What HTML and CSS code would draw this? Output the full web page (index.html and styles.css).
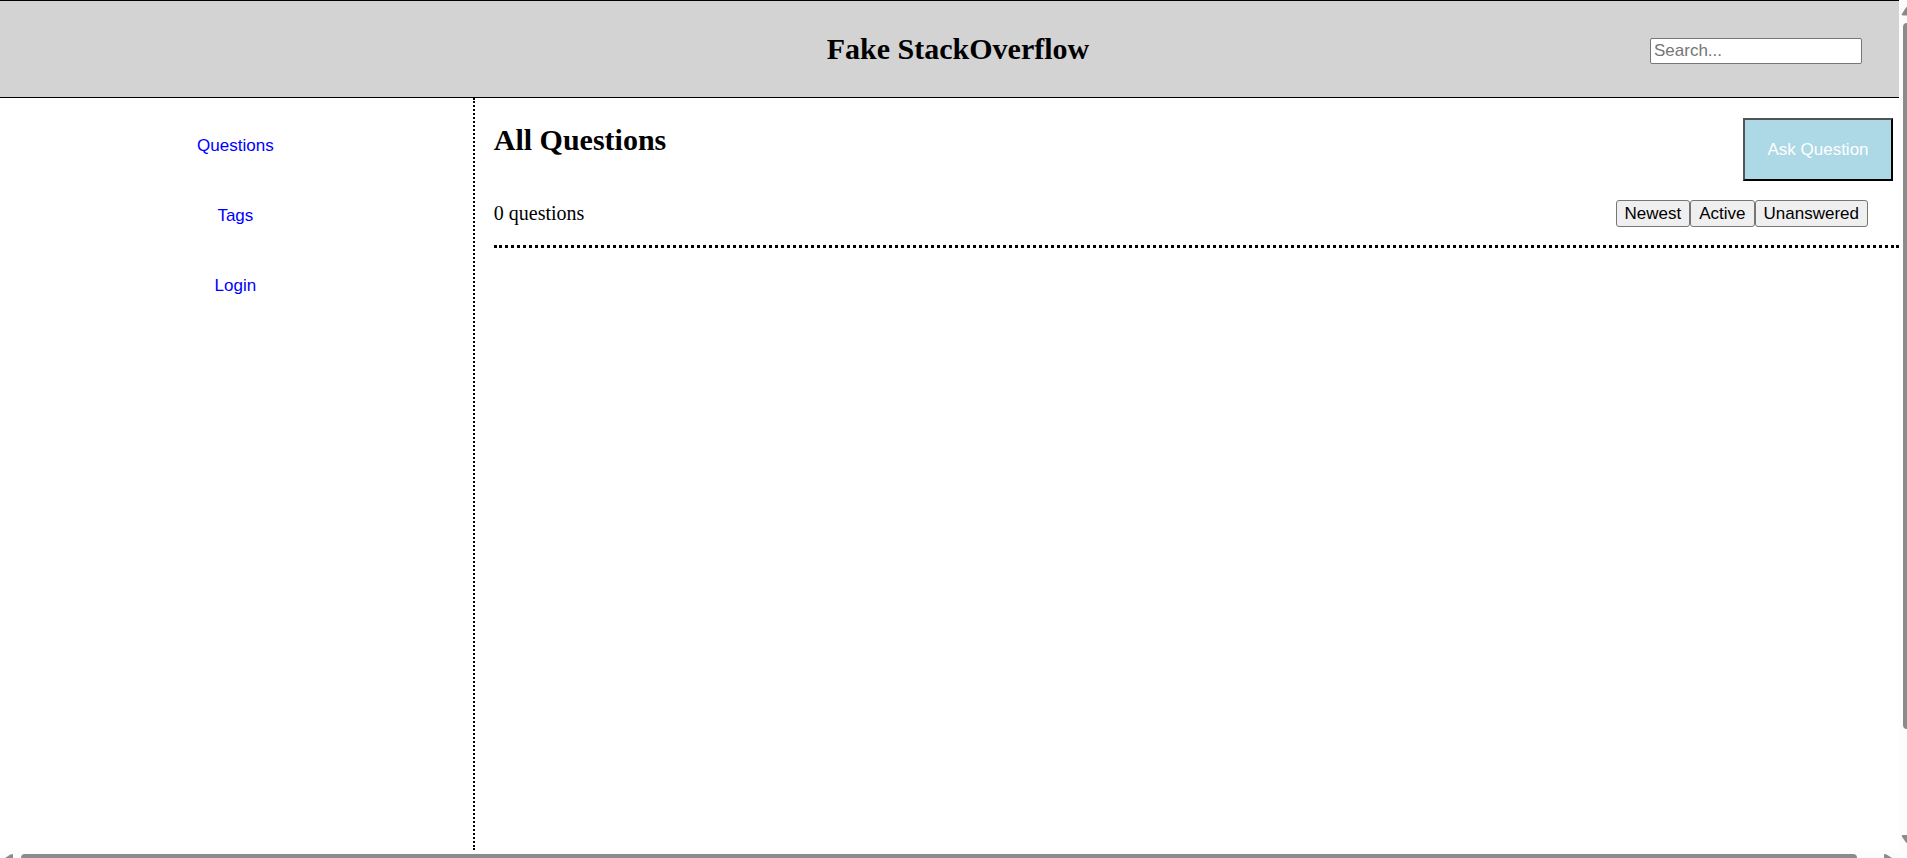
FILE: index.html
```html
<!DOCTYPE html>
<html lang="en">
<head>
<meta charset="utf-8">
<title>Fake StackOverflow</title>
<link rel="stylesheet" href="styles.css">
</head>
<body>
<div class="frame">
  <div class="page">
    <header class="header">
      <h1 class="title">Fake StackOverflow</h1>
      <input class="search" type="text" placeholder="Search..." aria-label="Search">
    </header>
    <div class="content">
      <nav class="sidebar">
        <a class="nav-link" href="#questions">Questions</a>
        <a class="nav-link" href="#tags">Tags</a>
        <a class="nav-link" href="#login">Login</a>
      </nav>
      <main class="main">
        <div class="main-top">
          <h2 class="main-title">All Questions</h2>
          <button class="ask" type="button">Ask Question</button>
        </div>
        <div class="main-bar">
          <span>0 questions</span>
          <div class="filters">
            <button class="filter" type="button">Newest</button>
            <button class="filter" type="button">Active</button>
            <button class="filter" type="button">Unanswered</button>
          </div>
        </div>
      </main>
    </div>
  </div>
  <div class="scroll-y" aria-hidden="true">
    <svg class="arrow-y" viewBox="0 0 8 23"><path d="M4 15.500Q2 15.500 3 13.800L7 7.500L8 7V15.500Z"/></svg>
    <div class="thumb-y"></div>
    <svg class="arrow-y" viewBox="0 0 8 23"><path d="M4 8Q2 8 3 9.700L7 15.500L8 16V8Z"/></svg>
  </div>
  <div class="scroll-x" aria-hidden="true">
    <svg class="arrow-x" viewBox="0 0 21 8"><path d="M5 8L10.500 4.500Q13 3.300 13 5V8Z"/></svg>
    <div class="thumb-x"></div>
    <svg class="arrow-x arrow-right" viewBox="0 0 21 8"><path d="M1 8V5Q1 3.300 3.500 4.500L9 8Z"/></svg>
  </div>
</div>
</body>
</html>
```
FILE: styles.css
```css
* {
  box-sizing: border-box;
}

body {
  margin: 0;
  background: #fff;
  color: #000;
  font-family: "Liberation Serif", "Times New Roman", serif;
  font-size: 20px;
}

.frame {
  display: grid;
  grid-template-columns: 1fr 8px;
  grid-template-rows: 1fr 8px;
  height: 100vh;
  overflow: hidden;
}

.page {
  display: flex;
  flex-direction: column;
  min-width: 0;
}

.header {
  display: grid;
  grid-template-columns: 1fr auto 1fr;
  align-items: center;
  padding: 31px 37px 31px 54px;
  border-top: 1px solid #000;
  border-bottom: 1px solid #000;
  background: lightgray;
}

.title,
.main-title {
  margin: 0;
  font-size: 30px;
  line-height: 34px;
}

.title {
  grid-column: 2;
}

.search,
.nav-link,
.ask,
.filter {
  font-family: "Liberation Sans", Arial, sans-serif;
  font-size: 17px;
}

.search {
  justify-self: end;
  width: 212px;
  height: 26px;
  margin: 4px 0 0;
  padding: 1px 3px;
  border: 1px solid #767676;
  border-radius: 2px;
  background: #fff;
}

.search::placeholder {
  color: #757575;
}

.content {
  display: grid;
  grid-template-columns: 1fr 3fr;
  flex: 1;
}

.sidebar {
  display: flex;
  flex-direction: column;
  align-items: center;
  gap: 50px;
  padding: 38px 2px 0 0;
  border-right: 2px dotted #000;
}

.nav-link {
  color: blue;
  line-height: 20px;
  text-decoration: none;
}

.main {
  padding: 20px 0 0 19px;
}

.main-top {
  display: flex;
  justify-content: space-between;
  align-items: flex-start;
  padding-right: 6px;
}

.main-title {
  padding-top: 5px;
}

.ask {
  width: 150px;
  height: 63px;
  padding: 0;
  border: 2px outset #000;
  background: lightblue;
  color: #fff;
}

.main-bar {
  display: flex;
  justify-content: space-between;
  align-items: center;
  padding: 19px 31px 18px 0;
  border-bottom: 3px dotted #000;
}

.filters {
  display: flex;
}

.filter {
  height: 27px;
  padding: 0 8px;
  border: 1px solid #767676;
  border-radius: 3px;
  background: #efefef;
  color: #000;
}

.scroll-y,
.scroll-x {
  display: flex;
  background: #fcfcfc;
  fill: #8b8b8b;
}

.scroll-y {
  flex-direction: column;
}

.scroll-x {
  grid-column: 1 / 3;
}

.thumb-y {
  flex: 1;
  margin: 0 0 98px 4px;
  border-radius: 4px 0 0 4px;
  background: #8b8b8b;
}

.thumb-x {
  flex: 1;
  margin: 4px 26px 0 0;
  border-radius: 4px 4px 0 0;
  background: #8b8b8b;
}

.arrow-y {
  width: 8px;
  height: 23px;
}

.arrow-x {
  width: 21px;
  height: 8px;
}

.arrow-right {
  margin-right: 3px;
}
```
